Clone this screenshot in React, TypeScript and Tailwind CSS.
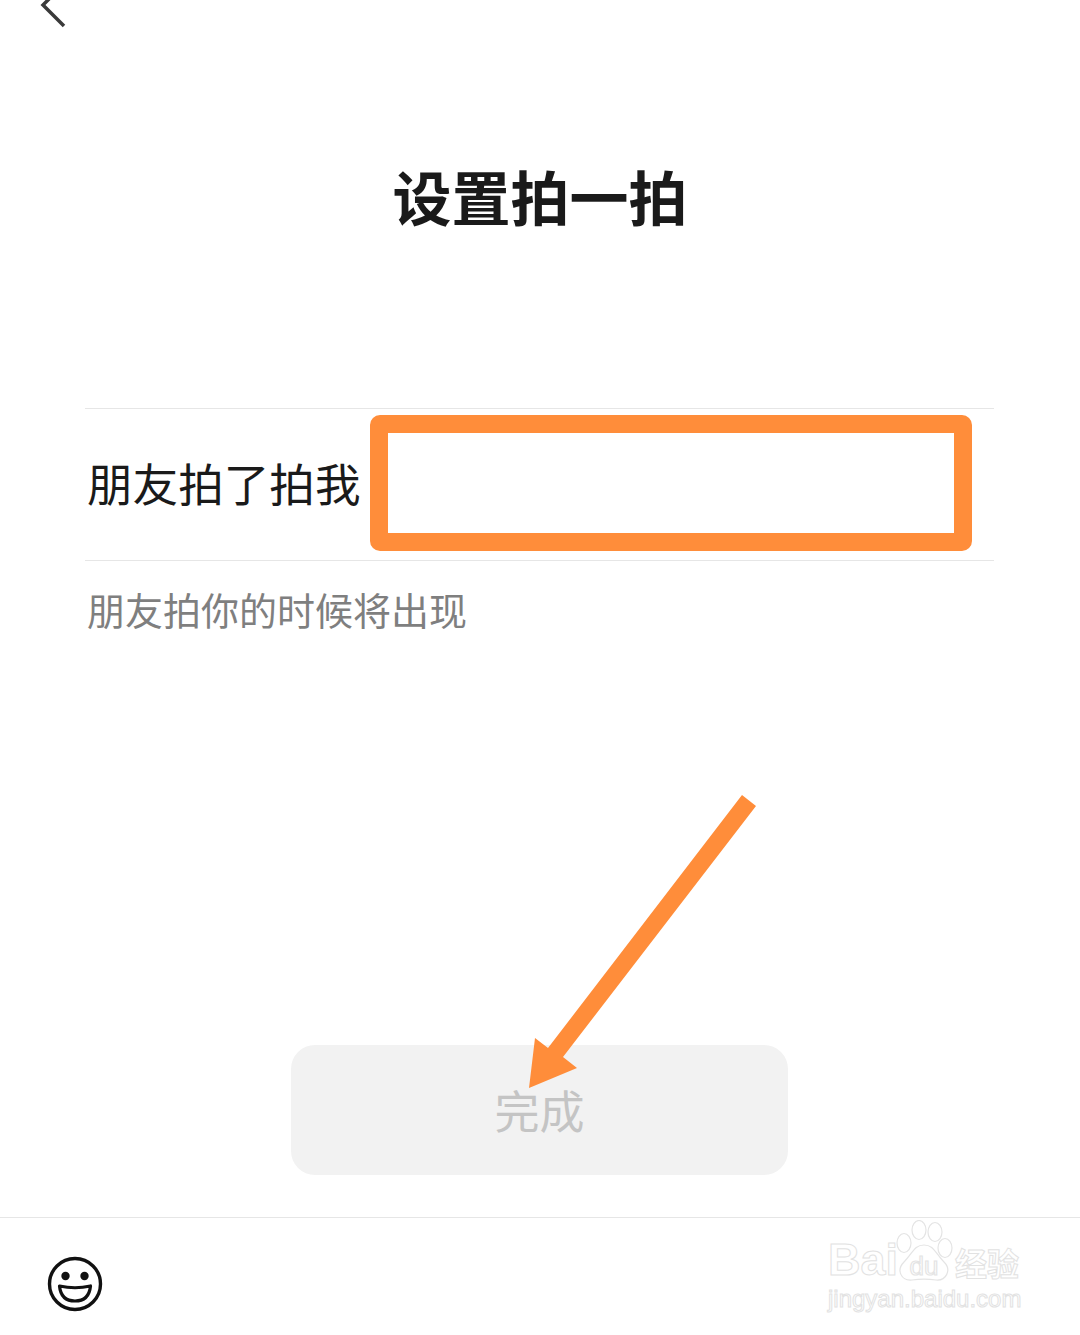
import React from "react";

const cjk = "font-['Noto_Sans_CJK_SC','Noto_Sans',sans-serif]";

function BackIcon() {
  return (
    <svg width="40" height="30" viewBox="0 0 40 30" className="ml-[34px] block" fill="none">
      <path d="M19 -5 L9 5 L30 26" stroke="#3a3a3a" strokeWidth="3.5" />
    </svg>
  );
}

function SmileIcon() {
  return (
    <svg width="56" height="56" viewBox="0 0 56 56" fill="none">
      <circle cx="28" cy="28" r="25.5" stroke="#111" strokeWidth="3.4" />
      <circle cx="18.5" cy="20" r="4.2" fill="#111" />
      <circle cx="37.5" cy="20" r="4.2" fill="#111" />
      <path d="M12.5 30 Q28 33.5 43.5 30 Q42 45 28 45 Q14 45 12.5 30 Z" stroke="#111" strokeWidth="3.2" strokeLinejoin="round" />
    </svg>
  );
}

function PawIcon() {
  return (
    <svg width="58" height="62" viewBox="0 0 58 62" fill="none" stroke="#e4e4e4" strokeWidth="1.2" className="-ml-[3px] shrink-0">
      <ellipse cx="24" cy="10" rx="7" ry="9.5" />
      <ellipse cx="40" cy="12" rx="7" ry="9.5" />
      <ellipse cx="9" cy="23" rx="7" ry="9.5" />
      <ellipse cx="50" cy="28" rx="7" ry="9.5" />
      <path d="M29 25 C39 25 40 33 49 42 C57 50 51 61 41 60 C34 59 24 59 17 60 C6 61 1 50 9 42 C18 33 19 25 29 25 Z" fill="#fff" />
      <text x="29" y="55" textAnchor="middle" fontSize="26" fontFamily="Liberation Sans, sans-serif" fill="#fff">du</text>
    </svg>
  );
}

function Watermark() {
  const outline = "text-white [-webkit-text-stroke:1px_#e2e2e2]";
  return (
    <div className="absolute left-[828px] top-[1220px] w-[200px]">
      <div className="flex h-[62px] items-end">
        <span className={`font-['Liberation_Sans',sans-serif] text-[45px] leading-[45px] font-bold ${outline}`}>Bai</span>
        <PawIcon />
        <span className={`${cjk} ml-[2px] text-[32px] leading-[40px] font-bold ${outline}`}>经验</span>
      </div>
      <div className={`mt-[3px] font-['Liberation_Sans',sans-serif] text-[24px] leading-[28px] ${outline}`}>jingyan.baidu.com</div>
    </div>
  );
}

export default function App() {
  return (
    <div className={`relative flex h-[1335px] w-[1080px] flex-col overflow-hidden bg-white ${cjk}`}>
      <BackIcon />

      {/* Title */}
      <h1 className="mt-[126px] text-center text-[59px] leading-[80px] font-bold text-[#1a1a1a]">设置拍一拍</h1>

      {/* Form */}
      <div className="mx-[85px] mt-[172px] w-[909px]">
        <div className="flex h-[153px] items-center border-y border-[#e6e6e6] pb-[3px] pl-[2px] text-[45.6px] leading-none text-[#1a1a1a]">
          朋友拍了拍我
        </div>
        <p className="mt-[23px] pl-[2px] text-[38px] leading-[50px] text-[#7f7f7f]">朋友拍你的时候将出现</p>
      </div>

      <div className="flex-1" />

      {/* Done button */}
      <button className="ml-[291px] flex h-[130px] w-[497px] items-center justify-center rounded-[24px] bg-[#f2f2f2] text-[45px] text-[#c4c4c4]">
        完成
      </button>

      {/* Bottom bar */}
      <div className="mt-[42px] h-[118px] border-t border-[#e6e6e6] pt-[38px] pl-[47px]">
        <SmileIcon />
      </div>

      <Watermark />

      {/* Annotations */}
      <div className="absolute left-[370px] top-[415px] h-[136px] w-[602px] rounded-[10px] border-[18px] border-[#ff8d3a]" />
      <svg className="absolute left-0 top-0" width="1080" height="1335" fill="none">
        <polygon points="742,795 756,806 563,1057 577,1068 529,1088 535,1038 548,1048" fill="#ff8d3a" />
      </svg>
    </div>
  );
}
